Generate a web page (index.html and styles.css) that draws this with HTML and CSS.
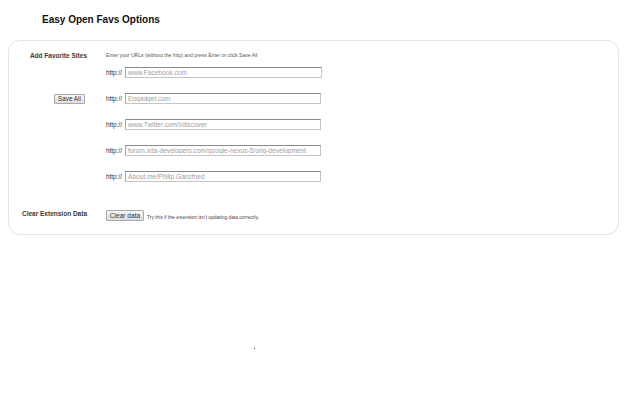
FILE: index.html
```html
<!DOCTYPE html>
<html>
<head>
<meta charset="utf-8">
<title>Easy Open Favs Options</title>
<link rel="stylesheet" href="styles.css">
</head>
<body>
<h1 class="title">Easy Open Favs Options</h1>
<div class="card">
  <div class="row row-intro">
    <div class="lbl">Add Favorite Sites</div>
    <div class="cell intro">Enter your URLs (without the http) and press Enter or click Save All</div>
  </div>
  <div class="row row-field">
    <div class="lbl"></div>
    <div class="cell"><span class="proto">http://</span><input class="url wide" type="text" placeholder="www.Facebook.com"></div>
  </div>
  <div class="row row-field">
    <div class="lbl"><button class="btn save">Save All</button></div>
    <div class="cell"><span class="proto">http://</span><input class="url" type="text" placeholder="Engadget.com"></div>
  </div>
  <div class="row row-field">
    <div class="lbl"></div>
    <div class="cell"><span class="proto">http://</span><input class="url" type="text" placeholder="www.Twitter.com/i/discover"></div>
  </div>
  <div class="row row-field">
    <div class="lbl"></div>
    <div class="cell"><span class="proto">http://</span><input class="url" type="text" placeholder="forum.xda-developers.com/google-nexus-5/orig-development"></div>
  </div>
  <div class="row row-field row-last">
    <div class="lbl"></div>
    <div class="cell"><span class="proto">http://</span><input class="url" type="text" placeholder="About.me/Philip.Ganzfried"></div>
  </div>
  <div class="row row-clear">
    <div class="lbl lbl-clear">Clear Extension Data</div>
    <div class="cell"><button class="btn clear">Clear data</button><span class="hint">Try this if the extension isn't updating data correctly.</span></div>
  </div>
</div>
<span class="speck"></span>
</body>
</html>
```

FILE: styles.css
```css
html, body {
  background: #ffffff;
}
body {
  margin: 8px;
  font-family: "Liberation Sans", Arial, sans-serif;
  color: #222;
  position: relative;
  height: 384px;
}
.title {
  margin: 6px 0 14px 34px;
  font-size: 10px;
  line-height: 12px;
  font-weight: bold;
  color: #111;
}
.card {
  width: 611px;
  box-sizing: border-box;
  border: 1px solid #e3e3e3;
  border-radius: 12px;
  padding: 10px 0 13px 0;
}
.row {
  display: flex;
  align-items: center;
}
.lbl {
  width: 78px;
  flex: none;
  text-align: right;
  font-size: 6.5px;
  font-weight: bold;
  color: #3a3a3a;
  display: flex;
  justify-content: flex-end;
  align-items: center;
  white-space: nowrap;
}
.cell {
  margin-left: 19px;
  display: flex;
  align-items: center;
}
.row-intro {
  height: 8px;
  margin-bottom: 8px;
}
.intro {
  font-size: 5.1px;
  color: #555;
  white-space: nowrap;
}
.row-field {
  height: 11px;
  margin-bottom: 15px;
}
.row-last {
  margin-bottom: 27px;
}
.row-clear {
  height: 12px;
  align-items: flex-start;
}
.lbl-clear {
  margin-top: 1px;
}
.proto {
  font-size: 6.4px;
  color: #33303a;
  margin-right: 3px;
}
.url {
  box-sizing: border-box;
  width: 196px;
  height: 11px;
  margin: 0;
  padding: 0 2px;
  font-family: "Liberation Sans", Arial, sans-serif;
  font-size: 6.6px;
  border: 1px solid #c4c4c4;
  border-top-color: #8a8a8a;
  border-left-color: #a8a8a8;
  border-radius: 0;
  background: #fff;
  outline: none;
}
.url.wide {
  width: 197px;
}
.url::placeholder {
  color: #a0a0a0;
}
.btn {
  box-sizing: border-box;
  margin: 0;
  padding: 0;
  white-space: nowrap;
  font-family: "Liberation Sans", Arial, sans-serif;
  font-weight: normal;
  color: #333;
  border: 1px solid #a9a9a9;
  border-radius: 1px;
  background: linear-gradient(#f6f6f6, #dedede);
  text-align: center;
}
.save {
  width: 31px;
  height: 10px;
  font-size: 6.3px;
  line-height: 8px;
  margin-right: 2px;
}
.clear {
  width: 38px;
  height: 11px;
  font-size: 6.6px;
  line-height: 9px;
  margin-top: 1px;
}
.hint {
  font-size: 4.9px;
  color: #444;
  margin-left: 3px;
  margin-top: 4px;
  white-space: nowrap;
}
.speck {
  position: absolute;
  left: 246px;
  top: 340px;
  width: 1px;
  height: 1px;
  background: #222;
}
```
